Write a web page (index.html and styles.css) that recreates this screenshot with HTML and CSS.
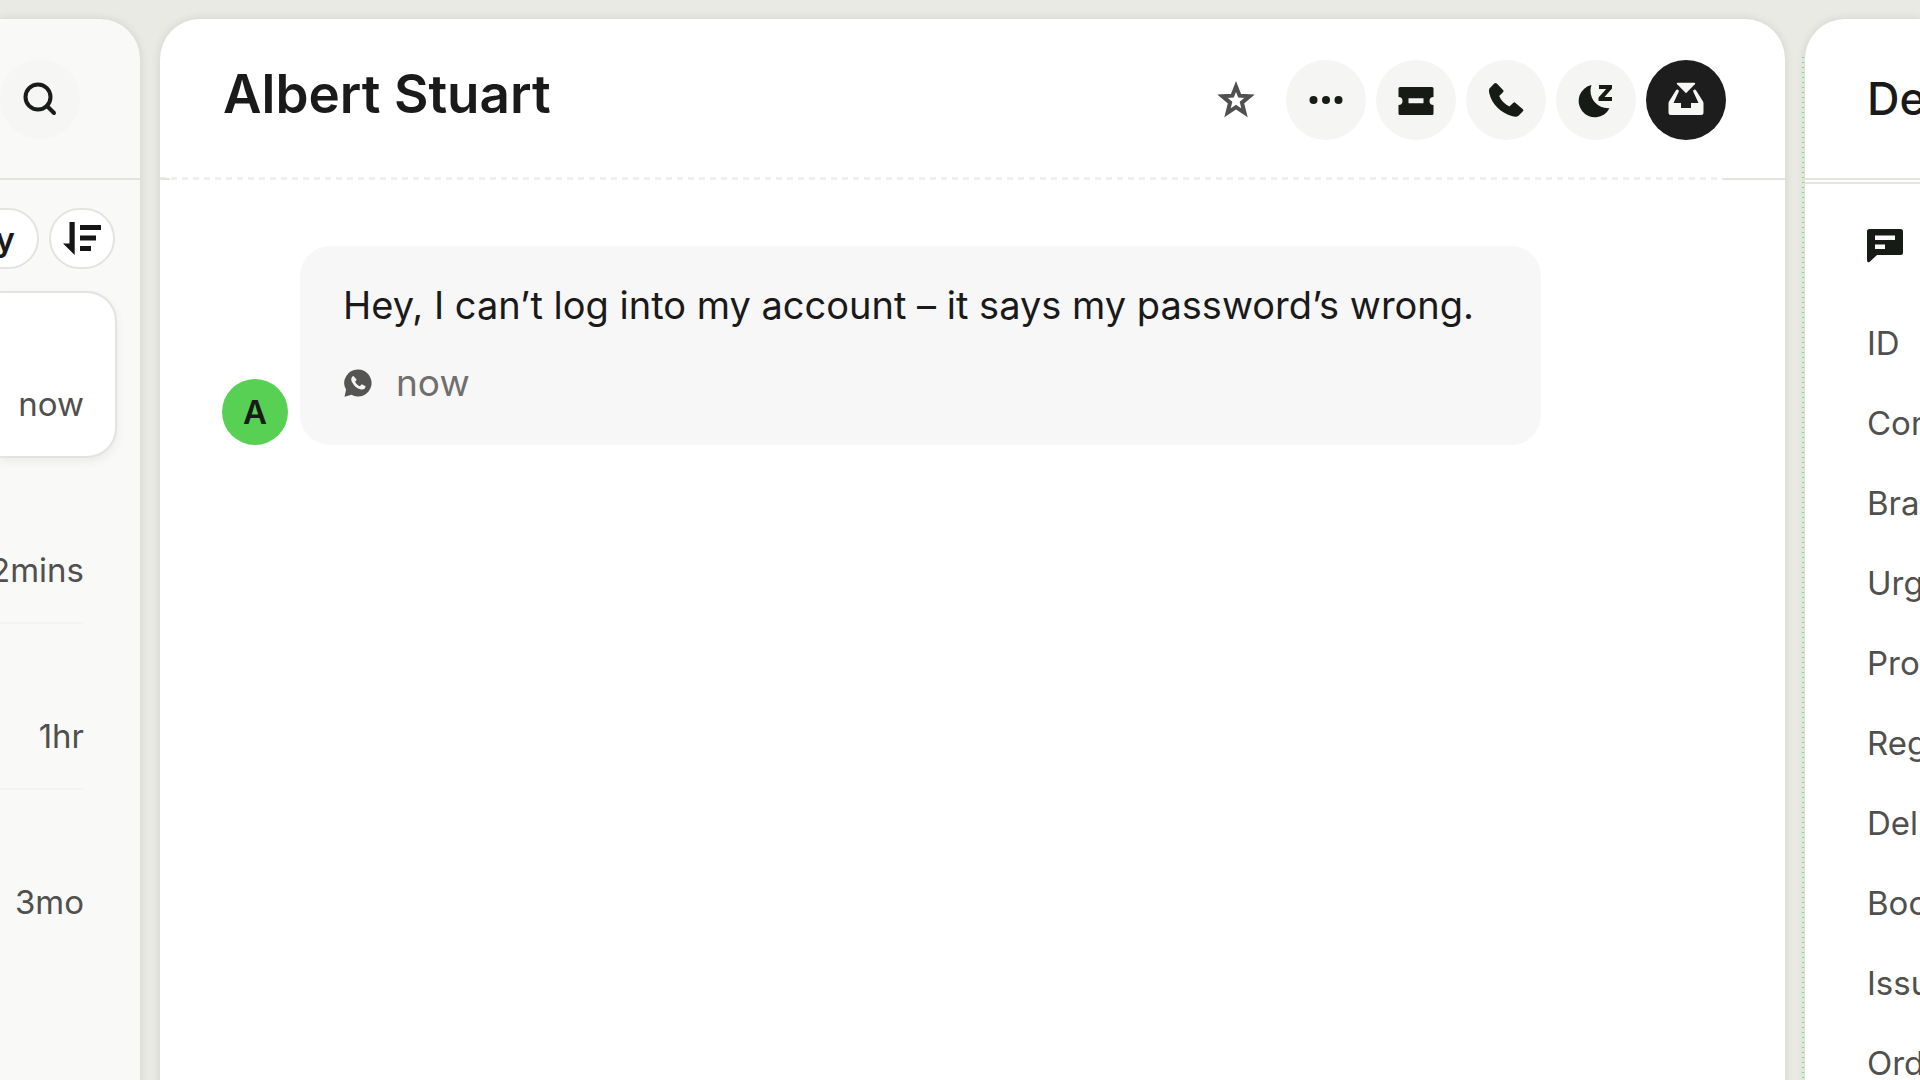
FILE: index.html
```html
<!DOCTYPE html>
<html lang="en">
<head>
  <meta charset="UTF-8">
  <meta name="viewport" content="width=device-width, initial-scale=1">
  <title>Inbox - Albert Stuart</title>
  <link rel="stylesheet" href="styles.css">
</head>
<body>
  <div class="app">
    <aside class="panel sidebar">
      <header class="panel-header">
        <button class="round-btn" aria-label="Search">
          <svg width="36" height="36" viewBox="0 0 36 36" fill="none" stroke="#1a1c19" stroke-width="4"><circle cx="16" cy="16" r="12.500"/><path d="M25 25l7 7" stroke-linecap="round"/></svg>
        </button>
      </header>
      <div class="filters">
        <button class="pill">y</button>
        <button class="pill pill-icon" aria-label="Sort">
          <svg width="38" height="34" viewBox="0 0 38 34" fill="#151515"><path d="M6.500 0h5.200v33L0 21.500h6.500zM17 3h21v5H17zM17 13.500h16v5H17zM17 24h11v5H17z"/></svg>
        </button>
      </div>
      <ul class="conversations">
        <li class="conversation active"><time>now</time></li>
        <li class="conversation"><time>2mins</time></li>
        <li class="conversation"><time>1hr</time></li>
        <li class="conversation"><time>3mo</time></li>
      </ul>
    </aside>

    <main class="panel chat">
      <header class="panel-header">
        <h1>Albert Stuart</h1>
        <div class="actions">
          <button class="star-btn" aria-label="Favourite">
            <svg width="40" height="40" viewBox="0 0 40 40" fill="none" stroke="#505050" stroke-width="4"><path d="M20 6.500l3.600 9.200 10 .6-7.700 6.300 2.600 10.200L20 27.200l-8.500 5.600 2.600-10.200-7.700-6.300 10-.6z"/></svg>
          </button>
          <button class="round-btn" aria-label="More">
            <svg width="36" height="36" viewBox="0 0 36 36" fill="#171b16"><circle cx="5.500" cy="18" r="4"/><circle cx="18" cy="18" r="4"/><circle cx="30.500" cy="18" r="4"/></svg>
          </button>
          <button class="round-btn" aria-label="Create ticket">
            <svg width="36" height="36" viewBox="0 0 36 36" fill="#171b16" fill-rule="evenodd"><path d="M2 5h32a1.500 1.500 0 0 1 1.500 1.500V15a4 4 0 0 0 0 8v8.500A1.500 1.500 0 0 1 34 33H2a1.500 1.500 0 0 1-1.500-1.500V23a4 4 0 0 0 0-8V6.500A1.500 1.500 0 0 1 2 5zM10.500 16.300v5h15v-5z"/></svg>
          </button>
          <button class="round-btn" aria-label="Call">
            <svg width="36" height="36" viewBox="0 0 36 36" fill="#171b16"><path d="M1.500 6.500L6.200 1.600a1.800 1.800 0 0 1 2.600 0l6.200 6.400a1.500 1.500 0 0 1 0 2.200L11.200 14c1.800 4.500 5.500 8.200 10.200 10.500l3.700-3.600a1.800 1.800 0 0 1 2.500 0l7 6a1.800 1.800 0 0 1 .1 2.600l-4.500 4.500c-1.500 1.300-4 .8-6.600 0C12.500 30.500 4 22 1.500 12c-.5-2-.9-4 0-5.500z"/></svg>
          </button>
          <button class="round-btn" aria-label="Snooze">
            <svg width="36" height="36" viewBox="0 0 36 36" fill="#171b16"><path d="M13.500 3C9.500 14 17.500 27 31.500 26.300A16.300 16.300 0 1 1 13.500 3z"/><path d="M21 3h13v3.500L26.500 15H34v4H20.500v-3.500L28.200 7H21z"/></svg>
          </button>
          <button class="round-btn dark" aria-label="Close conversation">
            <svg width="36" height="36" viewBox="0 0 36 36" fill="#f7f7f6"><path d="M10 .8h16q2 0 .8 1.400L18 11.200 9.200 2.200Q8 .8 10 .8z"/><path d="M8 8.200c1-1.500 3.500-.2 2.700 1.500L5.500 21H13v5h10v-5h7.500L25.300 9.700c-.8-1.700 1.700-3 2.700-1.500l7 11.300q.5 1 .5 2v9q0 2.500-2.500 2.500H3Q.5 33 .5 30.500v-9q0-1 .5-2z"/></svg>
          </button>
        </div>
      </header>
      <section class="messages">
        <article class="message">
          <span class="avatar">A</span>
          <div class="bubble">
            <p>Hey, I can’t log into my account – it says my password’s wrong.</p>
            <div class="meta">
              <svg width="28" height="28" viewBox="0 0 28 28"><path d="M14 .5a13.500 13.500 0 1 1-6.500 25.300L.5 27.800l1.600-7A13.500 13.500 0 0 1 14 .5z" fill="#555553"/><path d="M9.500 7c-2 .8-3 3-1.500 6 2 4 5 6.700 9 7.500 2.500.4 4.500-.7 4.500-3.200l-3.700-2-2 2c-2-.8-3.800-2.600-4.700-4.600l1.600-1.900z" fill="#f6f6f6"/></svg>
              <time>now</time>
            </div>
          </div>
        </article>
      </section>
    </main>

    <aside class="panel details">
      <header class="panel-header"><h2>Details</h2></header>
      <div class="details-body">
        <svg class="section-icon" width="36" height="34" viewBox="0 0 36 34" fill="#171b16" fill-rule="evenodd"><path d="M2.500 0h31Q36 0 36 2.500v21q0 2.500-2.500 2.500H10L2.500 33Q0 34 0 31V2.500Q0 0 2.500 0zM8 6.500V11h20V6.500zM8 15.500V20h10v-4.500z"/></svg>
        <ul class="fields">
          <li>ID</li>
          <li>Company</li>
          <li>Brand</li>
          <li>Urgency</li>
          <li>Product</li>
          <li>Region</li>
          <li>Delivery</li>
          <li>Booking</li>
          <li>Issue</li>
          <li>Order</li>
        </ul>
      </div>
    </aside>
  </div>
</body>
</html>
```

FILE: styles.css
```css
:root {
  --bg: #e9eae4;
  --line: #e3e4de;
  --ink: #1a1a1a;
  --muted: #50504e;
  --soft: #f5f5f4;
}
* {
  box-sizing: border-box;
}
body {
  margin: 0;
  background: var(--bg);
  color: var(--ink);
  font-family: Inter, "Liberation Sans", sans-serif;
  overflow: hidden;
}
h1, h2, p, ul {
  margin: 0;
  padding: 0;
}
ul {
  list-style: none;
}
button {
  font-family: inherit;
  color: inherit;
  border: none;
  padding: 0;
  cursor: pointer;
}
svg {
  display: block;
  flex-shrink: 0;
}

.app {
  display: grid;
  grid-template-columns: 140px 1fr 115px;
  gap: 20px;
  height: 100vh;
  padding-top: 19px;
}
.panel {
  min-width: 0;
  background: #fff;
  box-shadow: 0 0 8px rgba(60, 62, 50, 0.14);
}
.panel-header {
  display: flex;
  align-items: center;
  height: 161px;
  border-bottom: 2px solid var(--line);
}

.round-btn {
  display: flex;
  align-items: center;
  justify-content: center;
  flex-shrink: 0;
  width: 80px;
  height: 80px;
  border-radius: 50%;
  background: var(--soft);
}
.dark {
  background: #1d1d1d;
}

/* conversation list */
.sidebar {
  background: #f9f9f8;
  border-radius: 0 40px 0 0;
}
.sidebar .panel-header {
  justify-content: flex-end;
  padding-right: 60px;
}
.sidebar .round-btn {
  background: #f6f6f5;
}
.filters {
  display: flex;
  justify-content: flex-end;
  gap: 10px;
  padding: 28px 25px 22px 0;
}
.pill {
  display: flex;
  align-items: center;
  justify-content: center;
  flex-shrink: 0;
  height: 61px;
  padding: 0 22px;
  border: 2px solid var(--line);
  border-radius: 31px;
  background: #fff;
  font-size: 33px;
  font-weight: 600;
}
.pill-icon {
  width: 66px;
  padding: 0;
}
.conversation {
  display: flex;
  justify-content: flex-end;
  align-items: flex-end;
  height: 166px;
  margin-right: 56px;
  padding-bottom: 32px;
  border-bottom: 2px solid #f4f4f3;
  font-size: 33px;
  line-height: 40px;
  color: var(--muted);
}
.conversation:last-child {
  border-bottom-color: transparent;
}
.conversation.active {
  height: 167px;
  margin-right: 23px;
  padding-right: 31px;
  border: 2px solid var(--line);
  border-left: none;
  border-radius: 0 30px 30px 0;
  background: #fff;
  box-shadow: 0 4px 8px rgba(60, 62, 50, 0.07);
}

/* chat */
.chat {
  border-radius: 40px 40px 0 0;
}
.chat .panel-header {
  justify-content: space-between;
  padding: 0 59px 0 63px;
  border-bottom: none;
  background:
    linear-gradient(var(--line), var(--line)) left bottom / 10px 2px no-repeat,
    linear-gradient(var(--line), var(--line)) right bottom / 62px 2px no-repeat,
    repeating-linear-gradient(90deg, #efefed 0 6px, transparent 6px 11px) left bottom / calc(100% - 62px) 3px no-repeat;
}
.chat h1 {
  padding-bottom: 12px;
  font-size: 53px;
  font-weight: 600;
  line-height: 64px;
}
.actions {
  display: flex;
  align-items: center;
  gap: 10px;
}
.star-btn {
  margin-right: 20px;
  background: none;
}
.messages {
  padding: 66px 60px 0 62px;
}
.message {
  display: flex;
  align-items: flex-end;
  gap: 12px;
}
.avatar {
  display: flex;
  align-items: center;
  justify-content: center;
  flex-shrink: 0;
  width: 66px;
  height: 66px;
  border-radius: 50%;
  background: #57d053;
  font-size: 33px;
  font-weight: 600;
}
.bubble {
  padding: 29px 67px 32px 43px;
  border-radius: 30px;
  background: #f7f7f7;
}
.bubble p {
  font-size: 38px;
  line-height: 60px;
}
.meta {
  display: flex;
  align-items: center;
  gap: 24px;
  margin-top: 18px;
  padding-left: 1px;
  color: #6f6f6f;
  font-size: 37px;
  line-height: 60px;
}

/* details */
.details {
  position: relative;
  border-radius: 40px 0 0 0;
  white-space: nowrap;
}
.details::before {
  content: "";
  position: absolute;
  top: 38px;
  bottom: 0;
  left: -3px;
  width: 2px;
  background: repeating-linear-gradient(#7fd67c 0 1px, #dfe8da 1px 5px);
}
.details .panel-header,
.details-body {
  padding-left: 62px;
  overflow: hidden;
}
.details h2 {
  font-size: 45px;
  font-weight: 500;
  line-height: 56px;
}
.details-body {
  margin-top: 2px;
  border-top: 2px solid var(--line);
}
.section-icon {
  margin: 45px 0 40px;
}
.fields li {
  font-size: 33px;
  line-height: 80px;
  color: var(--muted);
}
```
